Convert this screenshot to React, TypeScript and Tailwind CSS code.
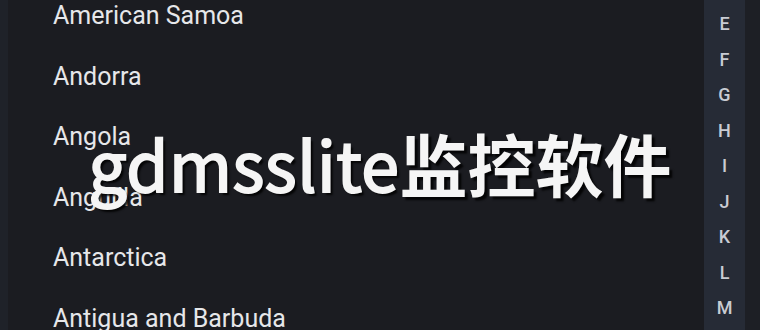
import React from "react";

const countries = [
  "American Samoa",
  "Andorra",
  "Angola",
  "Anguilla",
  "Antarctica",
  "Antigua and Barbuda",
];

const letters = ["E", "F", "G", "H", "I", "J", "K", "L", "M"];

const App = () => {
  return (
    <div className="relative w-[760px] h-[330px] overflow-hidden bg-[#1b1c21] flex">
      <div className="w-[8px] h-full bg-[#1f2229]" />
      <div className="flex-1 flex flex-col pl-[45px] -mt-[15px] font-['Roboto',sans-serif] text-[25px] text-[#e6e7ea]">
        {countries.map((c) => (
          <div key={c} className="h-[60.6px] leading-[61px] shrink-0">
            {c}
          </div>
        ))}
      </div>
      <div className="w-[41px] h-full bg-[#262b36] flex flex-col items-center pt-[6px] font-['Roboto',sans-serif] font-medium text-[18px] text-[#c9ccd3]">
        {letters.map((l) => (
          <div key={l} className="h-[35.5px] leading-[35.5px] shrink-0">
            {l}
          </div>
        ))}
      </div>
      <div className="w-[15px] h-full bg-[#1d1f25]" />
      <div className="absolute inset-0 flex items-center justify-center pb-[4px] pointer-events-none">
        <div className="font-['Noto_Sans_CJK_SC',sans-serif] text-[68px] leading-none text-[#f5f5f5] [text-shadow:3px_3px_2px_rgba(0,0,0,0.85)] flex items-baseline">
          <span className="font-normal tracking-[0.5px] [-webkit-text-stroke:2px_#f5f5f5]">gdmsslite</span>
          <span className="font-bold">监控软件</span>
        </div>
      </div>
    </div>
  );
};

export default App;
